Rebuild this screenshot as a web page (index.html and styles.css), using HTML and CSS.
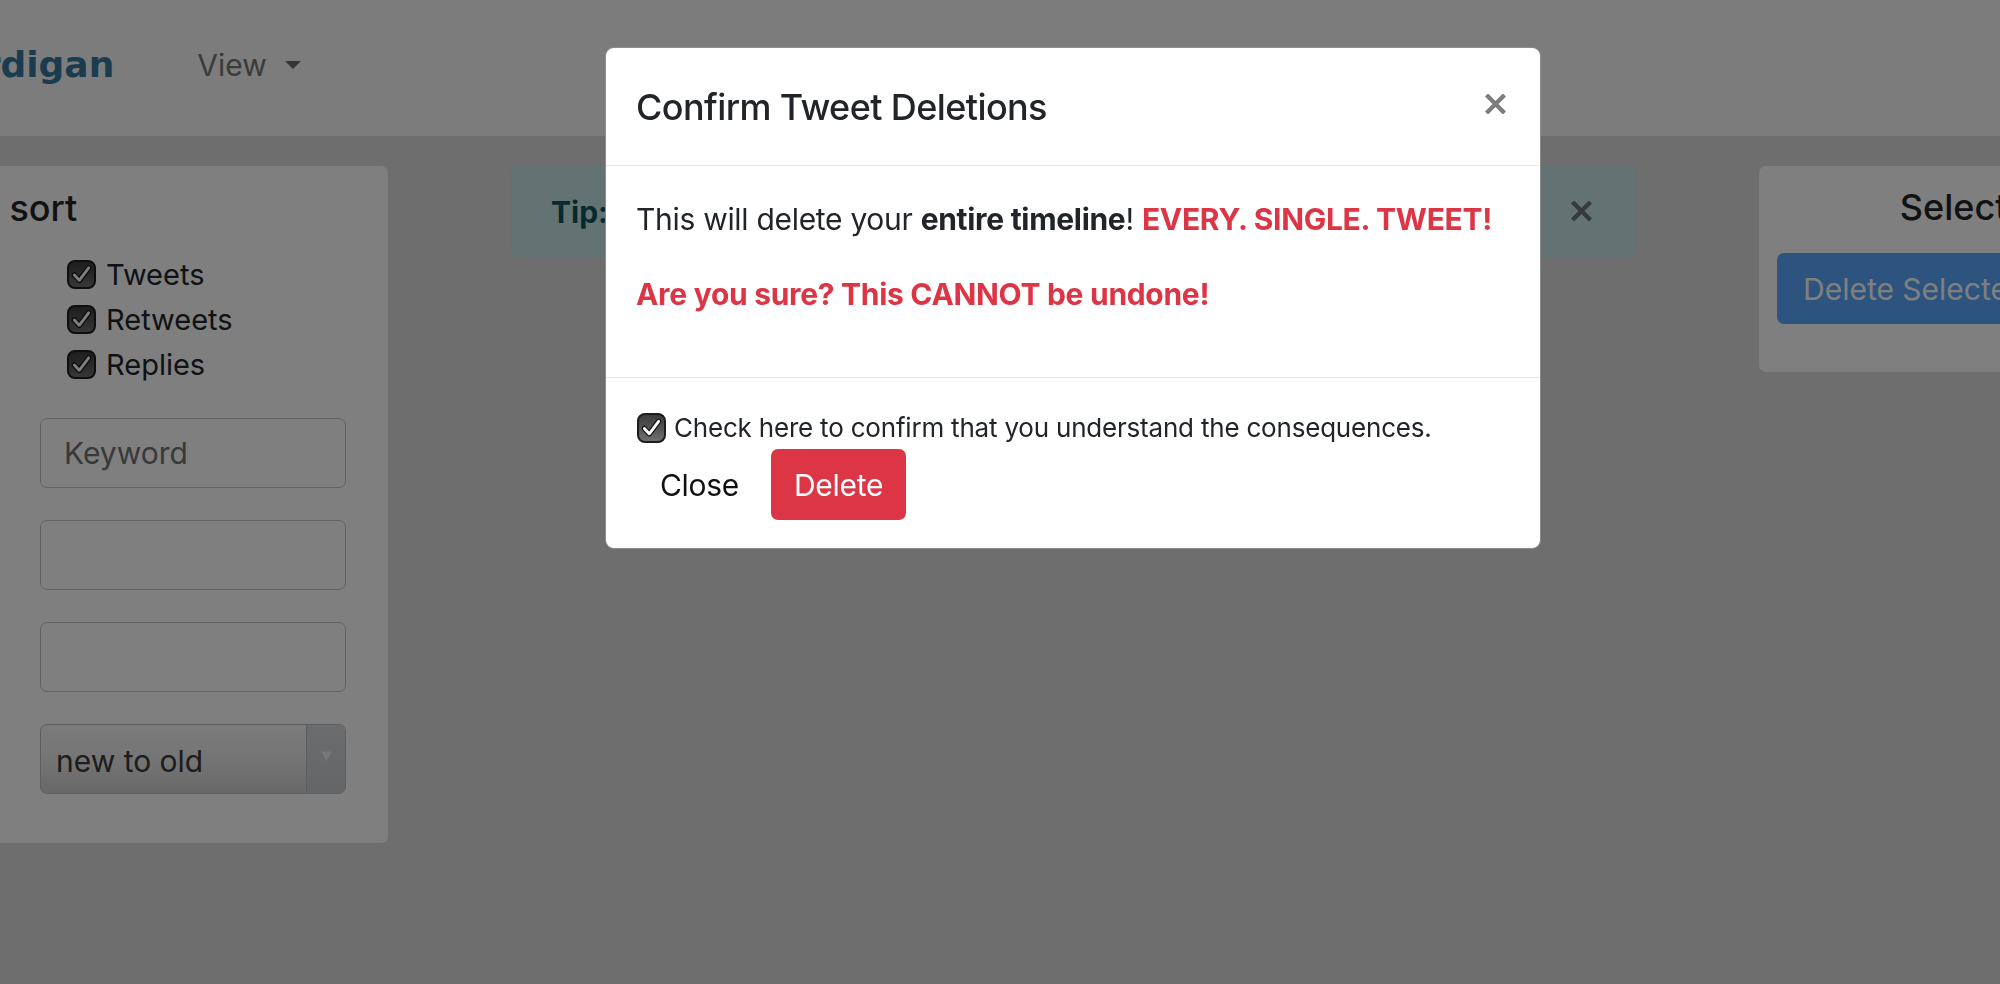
FILE: index.html
```html
<!DOCTYPE html>
<html lang="en">
<head>
<meta charset="utf-8">
<title>Cardigan – Confirm Tweet Deletions</title>
<link rel="stylesheet" href="styles.css">
</head>
<body>
<div class="page">
  <nav class="navbar">
    <a class="brand" href="#">Cardigan</a>
    <a class="nav-dropdown" href="#">View <span class="caret"></span></a>
  </nav>
  <main class="main">
    <aside class="panel filter-panel">
      <h4 class="panel-title">Filter and sort</h4>
      <ul class="check-list">
        <li><label class="check"><span class="checkbox"><svg viewBox="0 0 28 28"><path d="M6 14.5l5.5 6 10.5-14" class="ck-out"/><path d="M6 14.5l5.5 6 10.5-14" class="ck-in"/></svg></span>Tweets</label></li>
        <li><label class="check"><span class="checkbox"><svg viewBox="0 0 28 28"><path d="M6 14.5l5.5 6 10.5-14" class="ck-out"/><path d="M6 14.5l5.5 6 10.5-14" class="ck-in"/></svg></span>Retweets</label></li>
        <li><label class="check"><span class="checkbox"><svg viewBox="0 0 28 28"><path d="M6 14.5l5.5 6 10.5-14" class="ck-out"/><path d="M6 14.5l5.5 6 10.5-14" class="ck-in"/></svg></span>Replies</label></li>
      </ul>
      <input class="field" type="text" placeholder="Keyword">
      <input class="field" type="text">
      <input class="field" type="text">
      <div class="select">
        <select class="select-input"><option>new to old</option><option>old to new</option></select>
        <span class="select-arrow"><svg viewBox="0 0 12 10"><path d="M0 0h12L6 10z"/></svg></span>
      </div>
    </aside>
    <section class="content">
      <div class="alert">
        <span class="alert-text"><strong>Tip:</strong></span>
        <button class="alert-close" type="button" aria-label="Close"><svg viewBox="0 0 21 20"><path d="M1.5 1l18 18M19.5 1l-18 18"/></svg></button>
      </div>
    </section>
    <aside class="panel select-panel">
      <h4 class="panel-title center">Selected Tweets</h4>
      <button class="btn btn-primary" type="button" disabled>Delete Selected</button>
    </aside>
  </main>
</div>

<div class="backdrop"></div>

<div class="modal" role="dialog">
  <div class="modal-header">
    <h5 class="modal-title">Confirm Tweet Deletions</h5>
    <button class="modal-close" type="button" aria-label="Close"><svg viewBox="0 0 21 20"><path d="M1.5 1l18 18M19.5 1l-18 18"/></svg></button>
  </div>
  <div class="modal-body">
    <p>This will delete your <strong>entire timeline</strong>! <strong class="danger">EVERY. SINGLE. TWEET!</strong></p>
    <p><strong class="danger">Are you sure? This CANNOT be undone!</strong></p>
  </div>
  <div class="modal-footer">
    <label class="confirm-row"><span class="checkbox small"><svg viewBox="0 0 28 28"><path d="M6 14.5l5.5 6 10.5-14" class="ck-out"/><path d="M6 14.5l5.5 6 10.5-14" class="ck-in"/></svg></span>Check here to confirm that you understand the consequences.</label>
    <div class="modal-actions">
      <button class="btn btn-plain" type="button">Close</button>
      <button class="btn btn-danger" type="button">Delete</button>
    </div>
  </div>
</div>
</body>
</html>
```
FILE: styles.css
```css
* { box-sizing: border-box; }

html, body {
  margin: 0;
  height: 100%;
}

body {
  font-family: Inter, "Liberation Sans", sans-serif;
  font-size: 30px;
  line-height: 1.5;
  color: #212529;
  background: #dcdcdc;
  overflow: hidden;
}

/* page is horizontally scrolled: left part out of view */
.page {
  margin-left: -200px;
  width: 2750px;
}

.navbar {
  height: 136px;
  background: #f8f9fa;
  display: flex;
  align-items: center;
  padding: 0 0 6px 132px;
}

.brand {
  font-family: "DejaVu Sans", sans-serif;
  font-weight: 700;
  font-size: 36px;
  line-height: 1;
  color: #36799f;
  text-decoration: none;
  margin-right: 83px;
}

.nav-dropdown {
  display: inline-flex;
  align-items: center;
  gap: 18px;
  color: #767676;
  text-decoration: none;
  font-size: 30px;
}

.caret {
  width: 0;
  height: 0;
  border-top: 8px solid #6a6a6a;
  border-left: 8.5px solid transparent;
  border-right: 8.5px solid transparent;
}

.main {
  display: grid;
  grid-template-columns: 588px 1125px 566px;
  column-gap: 123px;
  align-items: start;
  padding-top: 30px;
}

.panel {
  background: #fff;
  border-radius: 7px;
}

.panel-title {
  margin: 0;
  font-size: 36px;
  font-weight: 500;
  line-height: 43px;
  color: #212529;
}

.center { text-align: center; }

.filter-panel {
  padding: 21px 42px 49px 39px;
}

.check-list {
  list-style: none;
  margin: 22px 0 31px 228px;
  padding: 0;
}

.check-list li {
  height: 45px;
  display: flex;
  align-items: center;
}

.check {
  display: flex;
  align-items: center;
  gap: 10px;
  font-size: 29px;
}

.checkbox {
  display: inline-flex;
  width: 29px;
  height: 29px;
  border-radius: 8px;
  border: 2px solid #1c1c1c;
  background: linear-gradient(#3c3c3c, #555 55%, #707070);
  flex: none;
}

.checkbox.small {
  width: 29px;
  height: 30px;
}

.checkbox svg {
  width: 100%;
  height: 100%;
}

.ck-out {
  fill: none;
  stroke: #161616;
  stroke-width: 6;
  stroke-linecap: round;
  stroke-linejoin: round;
}

.ck-in {
  fill: none;
  stroke: #fff;
  stroke-width: 3.2;
  stroke-linecap: round;
  stroke-linejoin: round;
}

.field {
  display: block;
  width: 306px;
  height: 70px;
  margin: 0 0 32px 201px;
  padding: 0 23px;
  border: 1.5px solid #c2c5c9;
  border-radius: 7px;
  background: #fff;
  font-family: inherit;
  font-size: 30px;
  color: #495057;
}

.field::placeholder { color: #727272; }

.select {
  display: flex;
  width: 306px;
  height: 70px;
  margin-left: 201px;
  border: 1.5px solid #bcbcbc;
  border-radius: 7px;
  overflow: hidden;
  background: linear-gradient(#f6f6f6, #ececec 45%, #d2d2d2);
}

.select-input {
  flex: 1;
  min-width: 0;
  appearance: none;
  -webkit-appearance: none;
  border: 0;
  background: transparent;
  font-family: inherit;
  font-size: 30px;
  color: #3a3a3a;
  padding: 4px 0 0 15px;
}

.select-arrow {
  width: 39px;
  display: flex;
  align-items: center;
  justify-content: center;
  background: linear-gradient(#d6d9dc, #c9ccd0);
  border-left: 1px solid #b9bcbf;
  padding-bottom: 6px;
}

.select-arrow svg {
  width: 11px;
  height: 10px;
  fill: #f2f2f2;
}

.alert {
  display: flex;
  align-items: center;
  justify-content: space-between;
  height: 92px;
  margin-top: -1px;
  padding: 0 43px 0 39px;
  background: #c7e6e9;
  border: 1px solid #bfe2e6;
  border-radius: 7px;
  color: #0c5460;
}

.alert-text {
  white-space: nowrap;
  padding-top: 2px;
}

.alert-close {
  border: 0;
  background: none;
  padding: 0;
  width: 21px;
  height: 20px;
  color: #6a7577;
  display: flex;
}

.alert-close svg, .modal-close svg {
  width: 100%;
  height: 100%;
  fill: none;
  stroke: currentColor;
  stroke-width: 4.4;
}

.select-panel {
  padding: 20px 18px 48px;
}

.btn {
  display: inline-flex;
  align-items: center;
  height: 71px;
  padding: 0 22px;
  border: 1px solid transparent;
  border-radius: 7px;
  font-family: inherit;
  font-size: 30px;
  letter-spacing: inherit;
  line-height: 1;
}

.select-panel .btn {
  margin-top: 24px;
  padding: 0 25px;
}

.btn-primary {
  background: #007bff;
  color: #fff;
  opacity: .65;
}

.backdrop {
  position: fixed;
  inset: 0;
  background: rgba(0, 0, 0, .5);
}

.modal {
  position: absolute;
  top: 47px;
  left: 605px;
  width: 936px;
  background: #fff;
  border: 1px solid rgba(0, 0, 0, .45);
  border-radius: 9px;
  letter-spacing: -0.3px;
}

.modal-header {
  display: flex;
  align-items: center;
  justify-content: space-between;
  padding: 31px 34px 30px 30px;
  border-bottom: 1px solid #e6e8eb;
}

.modal-title {
  margin: 0;
  font-size: 36px;
  font-weight: 500;
  letter-spacing: -0.6px;
  line-height: 56px;
}

.modal-close {
  border: 0;
  background: none;
  padding: 0;
  width: 21px;
  height: 20px;
  margin-top: -7px;
  color: #7d7d7d;
  display: flex;
}

.modal-body {
  padding: 31px 30px 30px;
}

.modal-body p {
  margin: 0 0 30px;
  white-space: nowrap;
}

.danger { color: #dc3545; }

.modal-footer {
  padding: 28px 30px 28px 31px;
  border-top: 1px solid #e6e8eb;
}

.confirm-row {
  display: flex;
  align-items: center;
  gap: 8px;
  height: 43px;
  font-size: 26px;
  letter-spacing: -0.2px;
}

.modal-actions {
  display: flex;
  gap: 9px;
}

.btn-plain {
  background: transparent;
  color: #111;
}

.btn-danger {
  background: #dc3545;
  color: #fff;
}
```
